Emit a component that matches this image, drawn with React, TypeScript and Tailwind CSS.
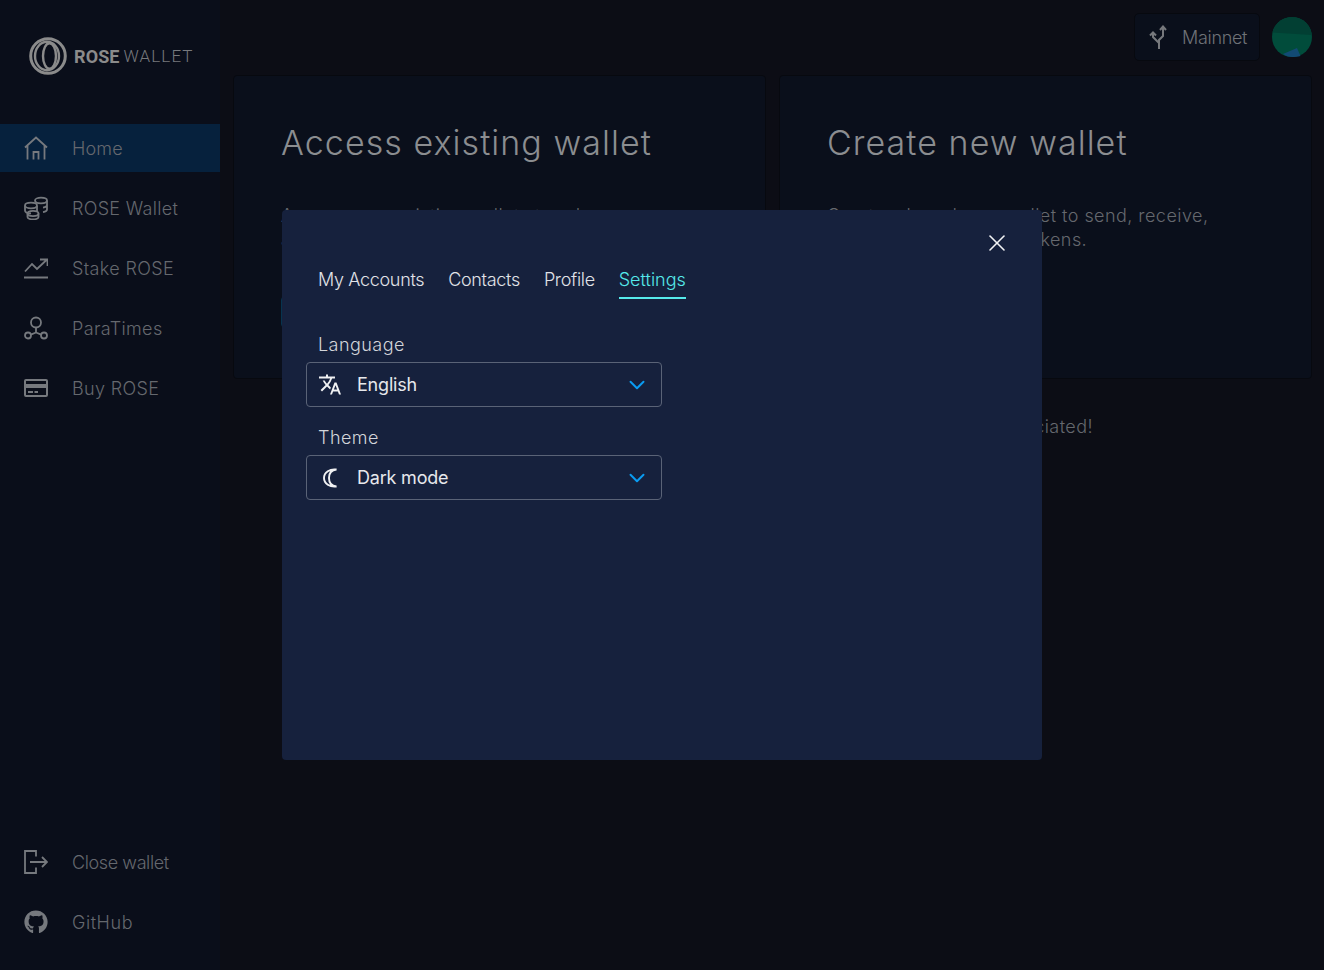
import { X, ChevronDown } from "lucide-react";
import { MdOutlineTranslate } from "react-icons/md";
import { FaGithub } from "react-icons/fa";
import type { ReactNode } from "react";

const ic = {
  width: 24,
  height: 24,
  viewBox: "0 0 24 24",
  fill: "none",
  stroke: "currentColor",
  strokeWidth: 1.8,
};

function HomeIcon() {
  return (
    <svg {...ic}>
      <path d="M1 11.500 12 1.500l11 10M3.500 9v14.500M20.500 9v14.500M9.500 23.500V16h5v7.500" />
    </svg>
  );
}

function CoinsIcon() {
  return (
    <svg {...ic}>
      <ellipse cx="17" cy="4.500" rx="6" ry="2.800" />
      <path d="M23 4.500v9c0 1.200-1.500 2.200-4 2.600M23 9c0 1.200-1.500 2.200-4 2.600" />
      <ellipse cx="7" cy="9.500" rx="6" ry="2.800" />
      <path d="M1 9.500v5c0 1.500 2.500 2.800 6 2.800M13 10v5" />
      <ellipse cx="9" cy="17.500" rx="5.500" ry="2.600" />
      <path d="M3.500 17.500v3.500c0 1.300 2.500 2.500 5.500 2.500s5.500-1.200 5.500-2.500v-3.500" />
    </svg>
  );
}

function TrendIcon() {
  return (
    <svg {...ic}>
      <path d="M1 15.500 8 8l5 5L23 3.500M16 3.500H23.500V10M0 21.500h24" />
    </svg>
  );
}

function NodesIcon() {
  return (
    <svg {...ic}>
      <circle cx="12" cy="6.500" r="5" />
      <circle cx="4" cy="19.500" r="3" />
      <circle cx="20" cy="19.500" r="3" />
      <path d="M12 11.500v5M12 16.500 6.800 18.600M12 16.500l5.200 2.100" />
    </svg>
  );
}

function CardIcon() {
  return (
    <svg width="24" height="24" viewBox="0 0 24 24" fill="currentColor">
      <path d="M2 3h20a2 2 0 0 1 2 2v14a2 2 0 0 1-2 2H2a2 2 0 0 1-2-2V5a2 2 0 0 1 2-2Zm0 2v3h20V5H2Zm0 7v7h20v-7H2Zm2 3h5v2H4v-2Zm6.500 0H14v2h-3.500v-2Z" />
    </svg>
  );
}

function LogoutIcon() {
  return (
    <svg {...ic}>
      <path d="M12 6.500V1H1v22h11v-5.500M6 12h17M18 7l5 5-5 5" />
    </svg>
  );
}

function ForkIcon() {
  return (
    <svg {...ic} strokeWidth={2}>
      <path d="M11 24v-9l4-4V2M11 18l-6-6V8M2 10.500 5 7.500l3 3M12 5l3-3.500L18 5" />
    </svg>
  );
}

function MoonIcon() {
  return (
    <svg className="ml-[2px]" width="18" height="20" viewBox="0 0 18 20" fill="none" stroke="currentColor" strokeWidth="1.900">
      <path d="M14.500 1.500C9.500 2 7 5.500 7 10s2.500 8 7.500 8.500C8 19.500 2 15.500 2 10S8 .5 14.500 1.500Z" />
    </svg>
  );
}

function Logo() {
  return (
    <svg width="38" height="38" viewBox="0 0 38 38" fill="none" stroke="#8b8b8b">
      <circle cx="19" cy="19" r="17.300" strokeWidth="3" />
      <ellipse cx="18" cy="19" rx="12" ry="14.200" strokeWidth="2.400" />
      <ellipse cx="20.500" cy="19" rx="6.500" ry="12.800" strokeWidth="2.400" />
    </svg>
  );
}

function NavItem({ icon, label, labelClass }: { icon: ReactNode; label: string; labelClass?: string }) {
  return (
    <div className="flex h-12 items-center gap-6 pl-6">
      <span className="flex h-6 w-6 items-center justify-center text-[#76797e]">{icon}</span>
      <span className={`text-[18px] font-light text-[#65686e] ${labelClass ?? "tracking-[0.35px]"}`}>{label}</span>
    </div>
  );
}

function WalletCard({ title, lines }: { title: string; lines: string[] }) {
  return (
    <div className="h-[304px] w-[533px] rounded-[4px] border border-[#07090f] bg-[#0a0f1b] pl-[47px] pt-[43px]">
      <h2 className="text-[34px] leading-[48px] font-light tracking-[1.05px] text-[#8b8d90]">{title}</h2>
      <div className="mt-[37px] text-[18px] leading-6 font-light tracking-[0.45px] text-[#65686e]">
        {lines.map((l) => (
          <p key={l}>{l}</p>
        ))}
      </div>
      <div className="mt-[44px] h-8 w-40 rounded-[4px] border border-[#07344f]" />
    </div>
  );
}

function Field({ label, icon, value }: { label: string; icon: ReactNode; value: string }) {
  return (
    <div>
      <div className="pl-3 text-[18px] leading-[24px] font-light tracking-[0.45px] text-[#d3d5da]">{label}</div>
      <div className="mt-[5px] flex h-[45px] w-[356px] items-center rounded-[4px] border border-[#5a6377] pl-[11px] pr-[11px]">
        <span className="flex w-6 justify-center text-[#f0f1f3]">{icon}</span>
        <span className="ml-[15px] flex-1 text-[18px] font-normal tracking-[-0.2px] text-[#e6e8ec]">{value}</span>
        <ChevronDown size={26} strokeWidth={1.8} className="text-[#0a9cf2]" />
      </div>
    </div>
  );
}

export default function App() {
  return (
    <div className="relative flex h-[970px] w-[1324px] overflow-hidden bg-[#0c0d15] font-['Inter',sans-serif]">
      <aside className="flex w-[220px] flex-col bg-[#0a0e1a]">
        <div className="flex h-[124px] items-center gap-[7px] pl-[29px] pb-[12px]">
          <Logo />
          <span className="text-[18px] font-bold tracking-[0.1px] text-[#8b8b8b] font-['Roboto',sans-serif]">ROSE</span>
          <span className="-ml-[3px] mt-[1px] text-[17px] font-light tracking-[1.1px] text-[#77797d] font-['Roboto',sans-serif]">WALLET</span>
        </div>
        <nav className="flex flex-col gap-3">
          <div className="bg-[#06213d]">
            <NavItem icon={<HomeIcon />} label="Home" labelClass="tracking-[0.15px]" />
          </div>
          <NavItem icon={<CoinsIcon />} label="ROSE Wallet" labelClass="tracking-[0.3px]" />
          <NavItem icon={<TrendIcon />} label="Stake ROSE" />
          <NavItem icon={<NodesIcon />} label="ParaTimes" />
          <NavItem icon={<CardIcon />} label="Buy ROSE" />
        </nav>
        <div className="mt-auto flex flex-col gap-3 pb-[24px]">
          <NavItem icon={<LogoutIcon />} label="Close wallet" labelClass="tracking-[-0.4px]" />
          <NavItem icon={<FaGithub size={24} />} label="GitHub" labelClass="tracking-[0.55px]" />
        </div>
      </aside>

      <main className="flex-1">
        <header className="flex h-[75px] items-start justify-end gap-3 pr-3 pt-[13px]">
          <div className="flex h-[48px] w-[126px] items-center gap-[10px] rounded-[5px] border border-[#07090f] bg-[#0a0f1b] pl-[13px]">
            <span className="text-[#76787c]"><ForkIcon /></span>
            <span className="text-[18px] font-light tracking-[-0.3px] text-[#6f7277]">Mainnet</span>
          </div>
          <svg className="mt-[4px]" width="40" height="40" viewBox="0 0 40 40">
            <circle cx="20" cy="20" r="20" fill="#014c3b" />
            <path d="M.3 15.500C2.500 6.500 10.500 0 20 0c10 0 18.500 7.500 19.800 18Z" fill="#023f33" />
            <path d="M11 37 25 31l3.500 8c-2.500.7-5.500 1-8.500 1-3 0-6.500-1-9-3Z" fill="#124a74" />
          </svg>
        </header>
        <div className="flex gap-[13px] pl-[13px]">
          <WalletCard
            title="Access existing wallet"
            lines={["Access your existing wallet stored on", "a Ledger or with your mnemonic."]}
          />
          <WalletCard
            title="Create new wallet"
            lines={["Create a brand new wallet to send, receive,", "stake and swap ROSE tokens."]}
          />
        </div>
        <div className="mt-[36px] flex justify-end pr-[231px]">
          <p className="whitespace-nowrap text-[18px] leading-6 font-light tracking-[0.45px] text-[#65686e]">
            This wallet is currently in beta, so please be careful. Your feedback is much appreciated!
          </p>
        </div>
      </main>

      <div className="absolute left-[282px] top-[210px] h-[550px] w-[760px] rounded-[4px] bg-[#16213d] pl-6 pt-[56px]">
        <button className="absolute right-[31px] top-[19px] text-[#f2f3f5]">
          <X size={28} strokeWidth={1.4} />
        </button>
        <div className="flex gap-6 pl-3 text-[18px] font-light tracking-[-0.33px] text-[#e1e3e8]">
          <span className="pb-[6px]">My Accounts</span>
          <span className="pb-[6px]">Contacts</span>
          <span className="pb-[6px]">Profile</span>
          <span className="border-b-2 border-[#55e9ea] pb-[4px] tracking-[0px] text-[#55e9ea]">Settings</span>
        </div>
        <div className="mt-[34px] flex flex-col gap-[19px]">
          <Field label="Language" icon={<MdOutlineTranslate size={25} />} value="English" />
          <Field label="Theme" icon={<MoonIcon />} value="Dark mode" />
        </div>
      </div>
    </div>
  );
}
